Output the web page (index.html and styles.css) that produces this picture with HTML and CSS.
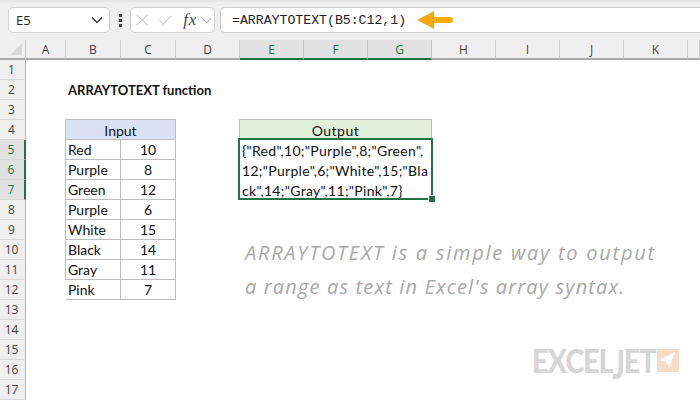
FILE: index.html
```html
<!DOCTYPE html>
<html lang="en">
<head>
<meta charset="utf-8">
<title>ARRAYTOTEXT function</title>
<link rel="stylesheet" href="styles.css">
</head>
<body>
<div class="app">
  <header class="toolbar">
    <div class="namebox">
      <span>E5</span>
      <svg class="chev" width="12" height="8" viewBox="0 0 12 8"><path d="M1 1.5 6 6.5l5-5" fill="none" stroke="#333" stroke-width="1.3"/></svg>
    </div>
    <div class="grip"><i></i><i></i><i></i></div>
    <div class="fxbox">
      <svg width="14" height="14" viewBox="0 0 14 14"><path d="M1 1l12 12M13 1 1 13" fill="none" stroke="#c4c4c4" stroke-width="1.2"/></svg>
      <svg width="16" height="12" viewBox="0 0 16 12"><path d="M1 6l5 5L15 1" fill="none" stroke="#c4c4c4" stroke-width="1.2"/></svg>
      <span class="fx">fx</span>
      <svg width="11" height="7" viewBox="0 0 11 7"><path d="M.5 1 5.5 6l5-5" fill="none" stroke="#8a8a8a" stroke-width="1.1"/></svg>
    </div>
    <div class="formula">
      <span class="ftext">=ARRAYTOTEXT(B5:C12,1)</span>
      <svg class="arrow" width="36" height="18" viewBox="0 0 36 18"><path d="M0 9 17 0v6h16a3 3 0 0 1 0 6H17v6z" fill="#f5a90c"/></svg>
    </div>
  </header>
  <main class="sheet">
    <div class="corner"><span class="tri"></span></div>
    <div class="ch">A</div><div class="ch">B</div><div class="ch">C</div><div class="ch">D</div>
    <div class="ch sel">E</div><div class="ch sel">F</div><div class="ch sel">G</div>
    <div class="ch">H</div><div class="ch">I</div><div class="ch">J</div><div class="ch">K</div><div class="ch"></div>

    <div class="rowheads">
      <div class="rh">1</div><div class="rh">2</div><div class="rh">3</div><div class="rh">4</div>
      <div class="rh sel">5</div><div class="rh sel">6</div><div class="rh sel">7</div>
      <div class="rh">8</div><div class="rh">9</div><div class="rh">10</div><div class="rh">11</div><div class="rh">12</div>
      <div class="rh">13</div><div class="rh">14</div><div class="rh">15</div><div class="rh">16</div><div class="rh">17</div>
    </div>

    <div class="title">ARRAYTOTEXT function</div>

    <div class="input">
      <div class="thead">Input</div>
      <div class="td">Red</div><div class="td num">10</div>
      <div class="td">Purple</div><div class="td num">8</div>
      <div class="td">Green</div><div class="td num">12</div>
      <div class="td">Purple</div><div class="td num">6</div>
      <div class="td">White</div><div class="td num">15</div>
      <div class="td">Black</div><div class="td num">14</div>
      <div class="td">Gray</div><div class="td num">11</div>
      <div class="td">Pink</div><div class="td num">7</div>
    </div>

    <div class="output">
      <div class="ohead">Output</div>
      <div class="obody">
        <div>{"Red",10;"Purple",8;"Green",</div>
        <div>12;"Purple",6;"White",15;"Bla</div>
        <div>ck",14;"Gray",11;"Pink",7}</div>
        <span class="handle"></span>
      </div>
    </div>

    <div class="note">
      <div>ARRAYTOTEXT is a simple way to output</div>
      <div class="note-second">a range as text in Excel's array syntax.</div>
    </div>

    <div class="logo">
      <span class="word">EXCEL<span class="j">J</span>ET</span>
      <svg width="22" height="23" viewBox="0 0 22 23"><rect width="22" height="23" fill="#f9dcc6"/><path d="M3 11 18 3l-6 16-2-6z" fill="#fff"/></svg>
    </div>
  </main>
</div>
</body>
</html>
```
FILE: styles.css
```css
* { box-sizing: border-box; }
html, body { margin: 0; padding: 0; }
body { width: 700px; height: 400px; overflow: hidden; background: #fff; }
.app { width: 700px; height: 400px; display: flex; flex-direction: column; overflow: hidden; }

/* toolbar */
.toolbar {
  height: 40px; flex: none; background: #efefef;
  display: flex; align-items: flex-start; padding: 5px 0 0 8px;
  border-top: 2px solid #e6e6e6;
}
.namebox {
  width: 102px; height: 26px; background: #fff; border: 1px solid #d4d4d4; border-radius: 5px;
  display: flex; align-items: center; justify-content: space-between; padding: 0 6px 0 7px;
  font: 13px "Open Sans", sans-serif; color: #222;
}
.grip { width: 20px; height: 26px; display: flex; flex-direction: column; align-items: center; justify-content: center; gap: 2px; }
.grip i { width: 3px; height: 3px; background: #444; display: block; }
.fxbox {
  width: 85px; height: 26px; background: #fff; border: 1px solid #d4d4d4; border-radius: 5px;
  display: flex; align-items: center; padding: 0 2px 0 5px; gap: 3px;
}
.fxbox svg:nth-child(2) { margin-left: 7px; }
.fx { font: italic 17px "Liberation Serif", serif; color: #444; margin-left: 8px; letter-spacing: 1px; margin-right: 2px; }
.formula {
  flex: 1; height: 26px; margin-left: 5px; background: #fff;
  border: 1px solid #d0d0d0; border-right: 0; border-radius: 5px 0 0 5px;
  display: flex; align-items: center; padding-left: 11px;
}
.ftext { font: 13.2px "Liberation Mono", monospace; color: #222; }
.arrow { margin-left: 11px; }

/* sheet */
.sheet {
  position: relative; flex: 1;
  display: grid;
  grid-template-columns: 26px 40px 55px 55px 64px 64px 64px 64px 64px 64px 64px 64px 12px;
  grid-template-rows: repeat(18, 20px);
  font-family: Lato, sans-serif;
  color: #111;
}
.corner { background: #efefef; border-right: 1px solid #c8c8c8; border-bottom: 2px solid #a9a9a9; position: relative; }
.tri { position: absolute; right: 3px; bottom: 3px; width: 0; height: 0; border-style: solid; border-width: 0 0 12px 12px; border-color: transparent transparent #d9d9d9 transparent; }
.ch {
  background: #efefef; border-right: 1px solid #d0d0d0; border-bottom: 2px solid #a9a9a9;
  font: 12px "Open Sans", sans-serif; color: #444; display: flex; align-items: center; justify-content: center;
}
.ch.sel { background: #e1e1e1; color: #1f7246; border-bottom-color: #217346; border-right-color: #c4c4c4; }
.rowheads { grid-column: 1; grid-row: 2 / 19; display: grid; grid-auto-rows: 20px; }
.rh {
  background: #efefef; border-right: 1px solid #b5b5b5; border-bottom: 1px solid #d8d8d8;
  font: 12px "Open Sans", sans-serif; color: #444; display: flex; align-items: center; justify-content: center; padding-right: 2px;
}
.rh.sel { background: #e1e1e1; color: #1f7246; border-right: 2px solid #217346; }

.title { grid-column: 3 / 8; grid-row: 3; font-weight: 700; font-size: 13px; display: flex; align-items: center; padding: 0 0 0 2px; }

.input {
  grid-column: 3 / 5; grid-row: 5 / 13; margin: -1px 0 0 -1px;
  display: grid; grid-template-columns: 55px 55px; grid-auto-rows: 20px;
  border-top: 1px solid #bdbdbd; border-left: 1px solid #bdbdbd;
  font-size: 14px;
}
.thead { grid-column: 1 / 3; background: #d9e1f2; border-right: 1px solid #bdbdbd; border-bottom: 1px solid #bdbdbd; display: flex; align-items: center; justify-content: center; padding-top: 1px; }
.td { border-right: 1px solid #bdbdbd; border-bottom: 1px solid #bdbdbd; display: flex; align-items: center; padding-left: 2px; }
.td.num { justify-content: center; padding-left: 0; }

.output { grid-column: 6 / 9; grid-row: 5 / 8; margin: -1px 0 0 -1px; position: relative; font-size: 14px; display: flex; flex-direction: column; }
.ohead { height: 19px; background: #e2efda; border: 1px solid #bdbdbd; border-bottom: 0; display: flex; align-items: center; justify-content: center; padding-top: 2px; letter-spacing: 0.5px; }
.obody { position: relative; margin: 0 -1px 0 -1px; height: 62px; border: 2px solid #217346; padding: 1px 0 0 2px; line-height: 20px; white-space: nowrap; background: #fff; }
.obody div { height: 20px; letter-spacing: 0.3px; }
.handle { position: absolute; right: -4px; bottom: -4px; width: 6px; height: 6px; background: #217346; border: 1px solid #fff; box-sizing: content-box; margin: -1px; }

.note {
  grid-column: 6 / 13; grid-row: 11 / 15; margin: -4px 0 0 5px;
  font: italic 400 20px/34px "Open Sans", sans-serif; letter-spacing: 1.75px; color: #a8a8a8; white-space: nowrap;
}
.note-second { letter-spacing: 1.15px; }
.logo { position: absolute; left: 532px; top: 309px; display: flex; align-items: flex-start; gap: 2px; }
.word { font: 900 32px/23px Lato, sans-serif; color: #d6d6d6; letter-spacing: -1.2px; display: inline-block; width: 123px; transform: scaleX(.9); transform-origin: left top; white-space: nowrap; }
.j { display: inline-block; transform: scaleY(1.25); transform-origin: center top; }
```
